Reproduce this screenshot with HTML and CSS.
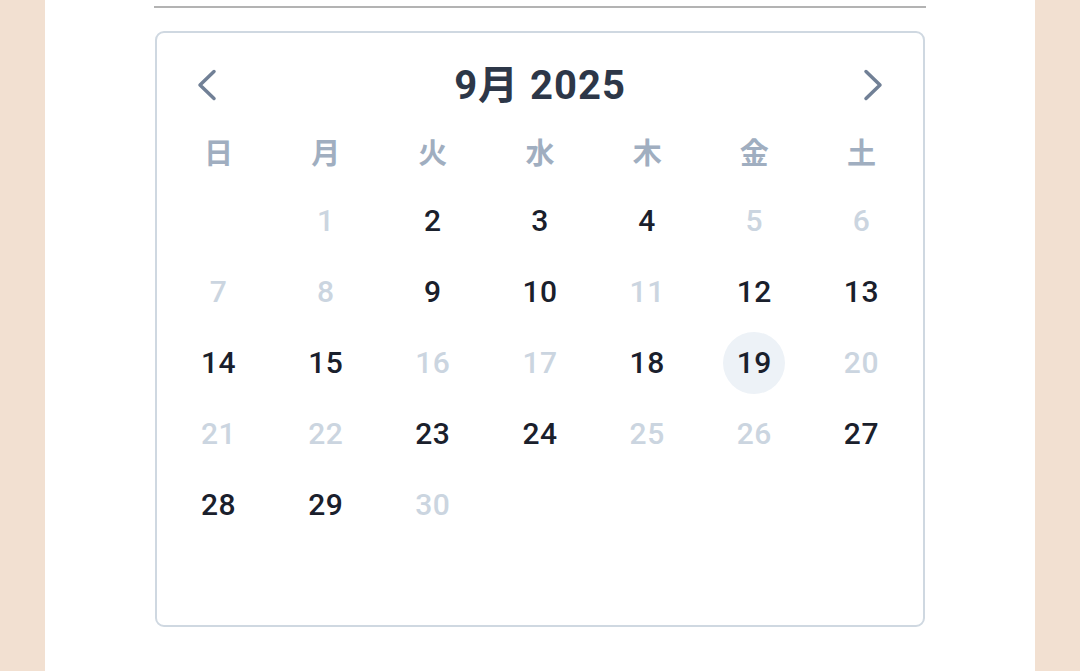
FILE: index.html
```html
<!DOCTYPE html>
<html lang="ja">
<head>
<meta charset="utf-8">
<title>カレンダー</title>
<link rel="stylesheet" href="styles.css">
</head>
<body>
<div class="page">
  <div class="rule"></div>
  <div class="card">
    <div class="header">
      <button class="nav" aria-label="前の月">
        <svg width="24" height="32" viewBox="0 0 24 32"><path d="M19 2.5 L5 16 L19 29.5" fill="none" stroke="#718096" stroke-width="3.5" stroke-linecap="round" stroke-linejoin="round"/></svg>
      </button>
      <div class="title">9月 2025</div>
      <button class="nav" aria-label="次の月">
        <svg width="24" height="32" viewBox="0 0 24 32"><path d="M5 2.5 L19 16 L5 29.5" fill="none" stroke="#718096" stroke-width="3.5" stroke-linecap="round" stroke-linejoin="round"/></svg>
      </button>
    </div>
    <div class="weekdays">
      <div>日</div><div>月</div><div>火</div><div>水</div><div>木</div><div>金</div><div>土</div>
    </div>
    <div class="days">
      <div class="day"></div>
      <div class="day off">1</div>
      <div class="day">2</div>
      <div class="day">3</div>
      <div class="day">4</div>
      <div class="day off">5</div>
      <div class="day off">6</div>

      <div class="day off">7</div>
      <div class="day off">8</div>
      <div class="day">9</div>
      <div class="day">10</div>
      <div class="day off">11</div>
      <div class="day">12</div>
      <div class="day">13</div>

      <div class="day">14</div>
      <div class="day">15</div>
      <div class="day off">16</div>
      <div class="day off">17</div>
      <div class="day">18</div>
      <div class="day today"><span>19</span></div>
      <div class="day off">20</div>

      <div class="day off">21</div>
      <div class="day off">22</div>
      <div class="day">23</div>
      <div class="day">24</div>
      <div class="day off">25</div>
      <div class="day off">26</div>
      <div class="day">27</div>

      <div class="day">28</div>
      <div class="day">29</div>
      <div class="day off">30</div>
    </div>
  </div>
</div>
</body>
</html>
```
FILE: styles.css
```css
html, body {
  margin: 0;
  padding: 0;
  height: 100%;
}
body {
  background: #f2e0d1;
  font-family: Roboto, "Noto Sans CJK JP", sans-serif;
  overflow: hidden;
}
.page {
  width: 990px;
  margin: 0 auto;
  min-height: 100%;
  background: #ffffff;
  padding: 6px 109px 0;
  box-sizing: border-box;
}
.rule {
  height: 2px;
  background: #b3b3b3;
}
.card {
  margin: 23px 1px 0;
  border: 2px solid #cfd8e1;
  border-radius: 9px;
  padding: 19px 8px 85px;
}
.header {
  height: 60px;
  display: flex;
  align-items: center;
  justify-content: space-between;
  padding: 0 30px 0 30px;
}
.nav {
  border: 0;
  background: none;
  padding: 0;
  margin-top: 5px;
  width: 24px;
  height: 32px;
  display: flex;
}
.title {
  font-size: 40px;
  font-weight: 700;
  color: #2d3748;
  letter-spacing: 1px;
}
.weekdays {
  margin-top: 16px;
  display: grid;
  grid-template-columns: repeat(7, 1fr);
  height: 46px;
  align-items: center;
  text-align: center;
  font-family: "Noto Sans CJK JP", sans-serif;
  font-size: 29px;
  font-weight: 700;
  color: #a0aec0;
}
.days {
  margin-top: 11px;
  display: grid;
  grid-template-columns: repeat(7, 1fr);
  grid-auto-rows: 71px;
}
.day {
  display: flex;
  align-items: center;
  justify-content: center;
  font-size: 30px;
  font-weight: 500;
  letter-spacing: 0.5px;
  color: #1a202c;
}
.day.off {
  color: #cbd5e0;
}
.day.today span {
  width: 62px;
  height: 62px;
  border-radius: 50%;
  background: #edf2f7;
  display: flex;
  align-items: center;
  justify-content: center;
}
```
